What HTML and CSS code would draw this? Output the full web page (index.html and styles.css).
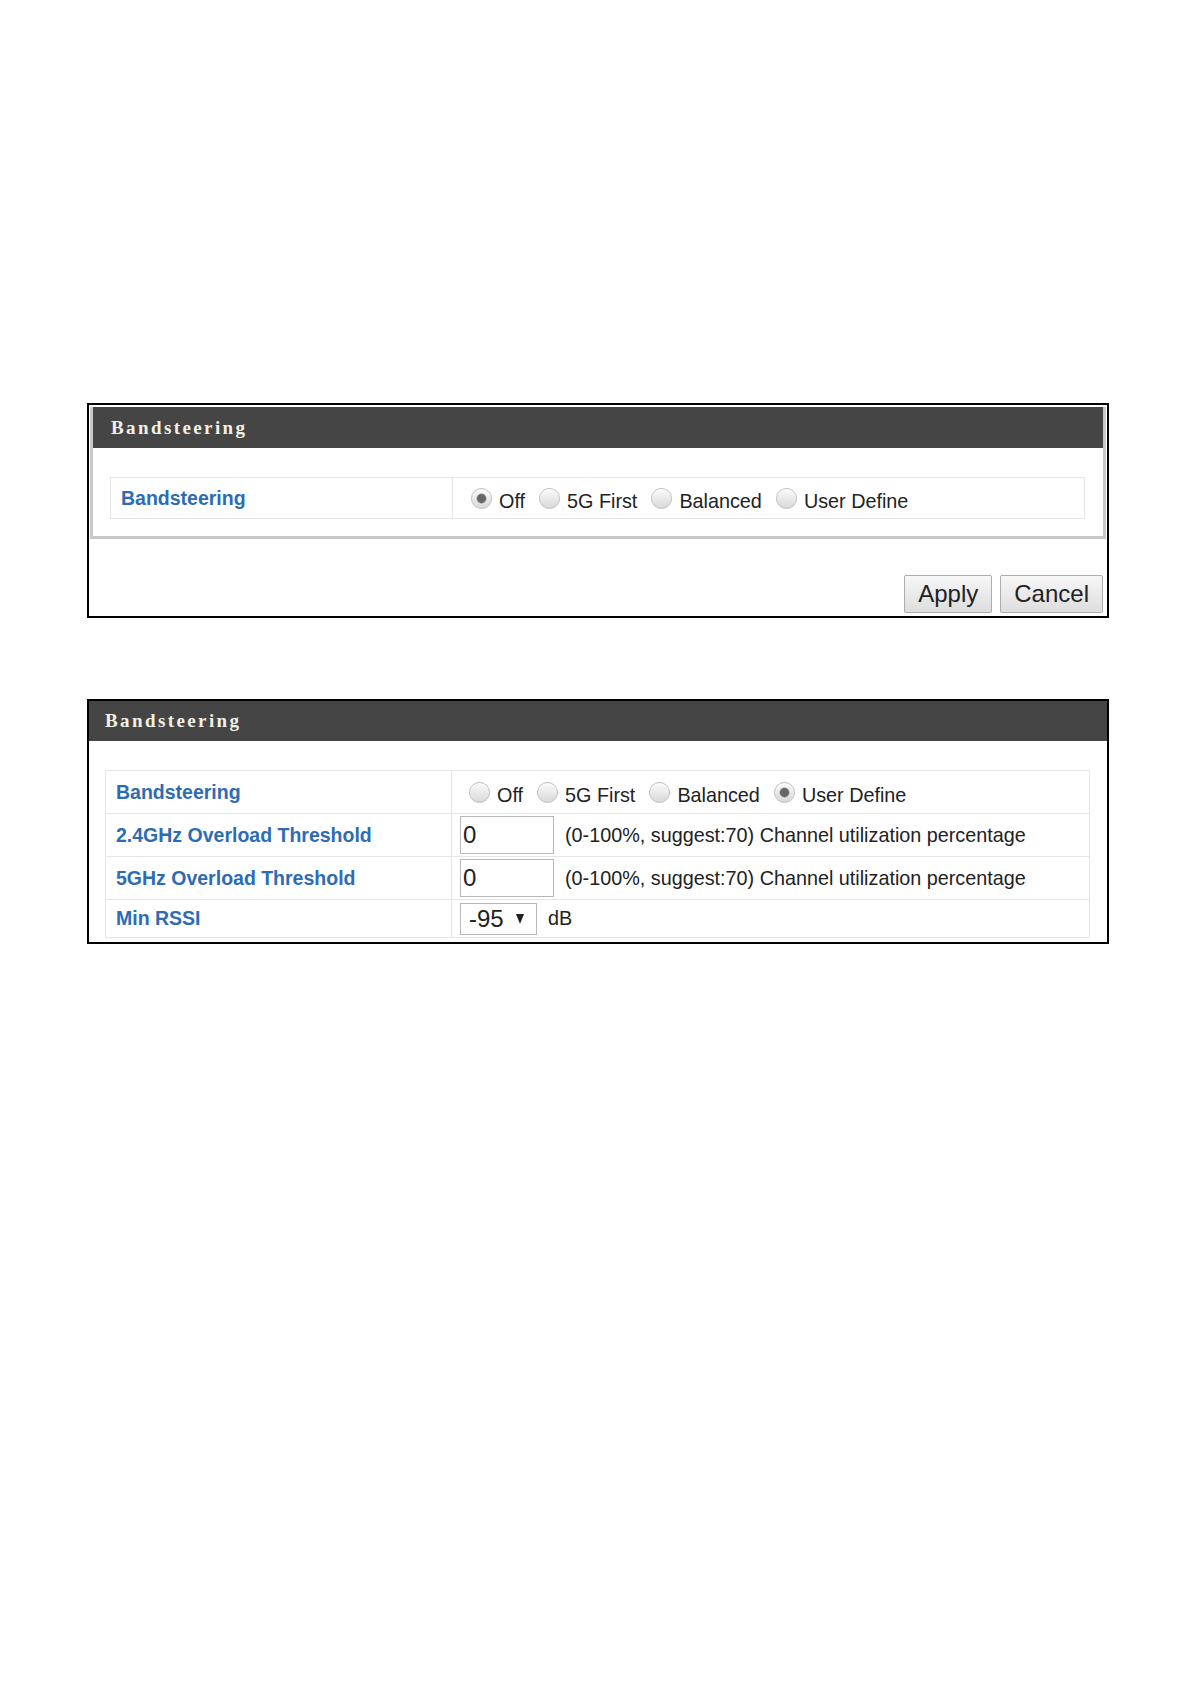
FILE: index.html
```html
<!DOCTYPE html>
<html lang="en">
<head>
    <meta charset="UTF-8">
    <meta name="viewport" content="width=device-width, initial-scale=1.0">
    <title>Bandsteering</title>
    <link rel="stylesheet" href="styles.css">
</head>
<body>
    <main class="page">

        <!-- band steering off -->
        <section class="panel panel-framed">
            <div class="panel-box">
                <h2 class="panel-head">Bandsteering</h2>
                <table class="settings settings-short">
                    <tr class="row-radio">
                        <th>Bandsteering</th>
                        <td>
                            <div class="choices">
                                <label class="choice"><input type="radio" name="bs1" checked><span>Off</span></label>
                                <label class="choice"><input type="radio" name="bs1"><span>5G First</span></label>
                                <label class="choice"><input type="radio" name="bs1"><span>Balanced</span></label>
                                <label class="choice"><input type="radio" name="bs1"><span>User Define</span></label>
                            </div>
                        </td>
                    </tr>
                </table>
            </div>
            <div class="panel-actions">
                <button type="button">Apply</button>
                <button type="button">Cancel</button>
            </div>
        </section>

        <!-- user define -->
        <section class="panel panel-plain">
            <h2 class="panel-head">Bandsteering</h2>
            <table class="settings settings-wide">
                <tr class="row-radio">
                    <th>Bandsteering</th>
                    <td>
                        <div class="choices">
                            <label class="choice"><input type="radio" name="bs2"><span>Off</span></label>
                            <label class="choice"><input type="radio" name="bs2"><span>5G First</span></label>
                            <label class="choice"><input type="radio" name="bs2"><span>Balanced</span></label>
                            <label class="choice"><input type="radio" name="bs2" checked><span>User Define</span></label>
                        </div>
                    </td>
                </tr>
                <tr class="row-field">
                    <th>2.4GHz Overload Threshold</th>
                    <td>
                        <div class="field">
                            <input type="text" class="num" value="0">
                            <span class="hint">(0-100%, suggest:70) Channel utilization percentage</span>
                        </div>
                    </td>
                </tr>
                <tr class="row-field">
                    <th>5GHz Overload Threshold</th>
                    <td>
                        <div class="field">
                            <input type="text" class="num" value="0">
                            <span class="hint">(0-100%, suggest:70) Channel utilization percentage</span>
                        </div>
                    </td>
                </tr>
                <tr class="row-last">
                    <th>Min RSSI</th>
                    <td>
                        <div class="field">
                            <span class="select">-95<span class="caret"></span></span>
                            <span class="hint">dB</span>
                        </div>
                    </td>
                </tr>
            </table>
        </section>

    </main>
</body>
</html>
```

FILE: styles.css
```css
body {
    margin: 0;
    background: #ffffff;
    font-family: "Liberation Sans", Arial, sans-serif;
    color: #222222;
}

.page {
    padding: 403px 0 0 87px;
}

.panel {
    width: 1018px;
    border: 2px solid #000000;
}

.panel-plain {
    margin-top: 81px;
    padding-bottom: 4px;
}

.panel-box {
    margin: 2px 1px 0;
    border: 3px solid #c8c8c8;
    border-top: 0;
}

.panel-head {
    margin: 0;
    height: 41px;
    line-height: 41px;
    padding-left: 18px;
    background: #444544;
    color: #f3f0e6;
    font-family: "Liberation Serif", "Times New Roman", serif;
    font-size: 19px;
    font-weight: bold;
    letter-spacing: 2.4px;
}

.panel-plain .panel-head {
    height: 40px;
    line-height: 40px;
    padding-left: 16px;
}

/* table of settings */
.settings {
    border-collapse: collapse;
    table-layout: fixed;
    border: 1px solid #e6e6e6;
}

.settings-short {
    width: 975px;
    margin: 29px 0 17px 17px;
}

.settings-wide {
    width: 985px;
    margin: 29px 0 0 16px;
}

.settings th {
    width: 331px;
    padding: 0 0 0 10px;
    text-align: left;
    font-size: 19.5px;
    font-weight: bold;
    color: #2d6cb5;
    border: 1px solid #e6e6e6;
}

.settings-wide th {
    width: 335px;
}

.settings td {
    padding: 0 8px;
    border: 1px solid #e6e6e6;
    font-size: 19.8px;
    vertical-align: middle;
}

.settings-short .row-radio td,
.settings-short .row-radio th {
    height: 40px;
}

.settings-wide .row-radio td,
.settings-wide .row-radio th,
.row-field td,
.row-field th {
    height: 42px;
}

.row-last td,
.row-last th {
    height: 37px;
}

.choices {
    display: flex;
    align-items: center;
    gap: 14px;
    padding-left: 10px;
}

.settings-wide .choices {
    padding-left: 9px;
}

.choice {
    display: flex;
    align-items: center;
    gap: 7px;
    color: #222222;
}

.choice span {
    margin-top: 7px;
}

.choice input {
    appearance: none;
    -webkit-appearance: none;
    width: 21px;
    height: 21px;
    margin: 0;
    border: 1px solid #bdbdbd;
    border-radius: 50%;
    background: linear-gradient(#fbfbfb, #d8d8d8);
    box-shadow: inset 0 1px 1px #ffffff;
}

.choice input:checked {
    background: radial-gradient(circle, #666666 0 4px, #9a9a9a 4.5px, transparent 5.5px),
                linear-gradient(#fbfbfb, #d8d8d8);
}

.field {
    display: flex;
    align-items: center;
}

.num {
    box-sizing: border-box;
    width: 94px;
    height: 38px;
    margin: 0;
    padding: 0 2px;
    border: 1px solid #b8b8b8;
    font-family: "Liberation Sans", Arial, sans-serif;
    font-size: 24px;
    color: #222222;
}

.hint {
    margin-left: 11px;
    color: #222222;
}

.select {
    box-sizing: border-box;
    display: flex;
    align-items: center;
    width: 77px;
    height: 32px;
    padding-left: 8px;
    border: 1px solid #b8b8b8;
    font-size: 24px;
}

.caret {
    width: 0;
    height: 0;
    margin-left: 12px;
    border-left: 4.5px solid transparent;
    border-right: 4.5px solid transparent;
    border-top: 10px solid #222222;
}

.panel-actions {
    display: flex;
    justify-content: flex-end;
    gap: 8px;
    padding: 36px 4px 3px;
}

button {
    box-sizing: border-box;
    height: 38px;
    padding: 0 13px;
    border: 1px solid #adadad;
    border-radius: 2px;
    background: linear-gradient(#f7f7f7, #dddddd);
    font-family: "Liberation Sans", Arial, sans-serif;
    font-size: 24px;
    color: #222222;
}
```
